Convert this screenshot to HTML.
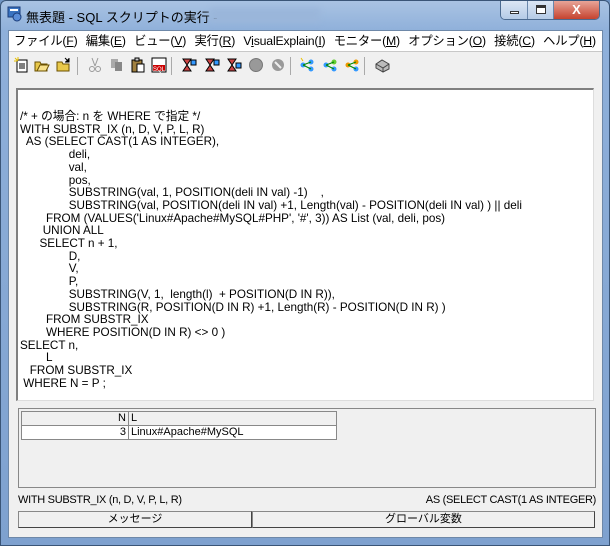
<!DOCTYPE html>
<html><head><meta charset="utf-8"><style>
*{margin:0;padding:0;box-sizing:border-box}
body{width:610px;height:546px;overflow:hidden;background:#6f94c3;font-family:"Liberation Sans","Noto Sans CJK JP",sans-serif;position:relative}
.frame{position:absolute;left:0;top:0;width:610px;height:546px;background:linear-gradient(180deg,#a9c3e3 0,#8fb0da 30px,#7ea1cf 100%);border:1px solid #3a5577;border-radius:6px 6px 0 0}
.title{position:absolute;left:26px;top:7px;font-size:13px;color:#000}
.blur{position:absolute;left:210px;top:8px;width:110px;height:14px;background:#9ab6da;filter:blur(3px)}
.btns{position:absolute;left:500px;top:1px;height:19px;display:flex;border:1px solid #4b6a90;border-top:none;border-radius:0 0 5px 5px;overflow:hidden}
.btns div{height:18px;background:linear-gradient(#dbe6f4,#b5cbe6);border-right:1px solid #6a87ab;position:relative}
.client{position:absolute;left:8px;top:30px;width:595px;height:508px;background:#f0f0f0;border:1px solid #6e88a8;overflow:hidden}
.menu{position:absolute;left:0;top:0;width:593px;height:21px;background:#fff;border-bottom:1px solid #c8c8c8;font-size:12.3px;white-space:nowrap;padding:0 6px 0 5px;line-height:21px;display:flex;justify-content:space-between;letter-spacing:-0.2px}
.tb{position:absolute;top:22px;left:0;height:24px;width:593px}
.ic{position:absolute;top:4px;width:16px;height:16px}
.editor{position:absolute;left:7px;top:57px;width:578px;height:313px;background:#fff;border-top:2px solid #808080;border-left:2px solid #808080;border-right:1px solid #ddd;border-bottom:1px solid #ddd;overflow:hidden}
pre{position:absolute;left:2px;top:21px;font-family:"Liberation Sans","Noto Sans CJK JP",sans-serif;font-size:11.7px;line-height:12.7px;color:#000;letter-spacing:0}
.res{position:absolute;left:9px;top:377px;width:578px;height:80px;border:1px solid #888;background:#f0f0f0}
table{position:absolute;left:2px;top:2px;border-collapse:collapse;font-size:11px}
td{border:1px solid #888;height:14px;padding:0 2px;line-height:13px}
.stat{position:absolute;left:9px;top:463px;width:578px;font-size:11px;letter-spacing:-0.3px}
.tab{position:absolute;top:480px;height:17px;border:1px solid #888;border-right-color:#444;border-bottom-color:#444;background:#f0f0f0;font-size:11px;text-align:center;line-height:15px}
</style></head><body>
<div class="frame"></div>
<svg style="position:absolute;left:7px;top:6px" width="16" height="16"><rect x="1" y="1" width="12" height="10" fill="#3a73c0" stroke="#1b3d7a"/><rect x="3" y="3" width="8" height="2" fill="#fff"/><circle cx="10" cy="11" r="4" fill="#5a8dd8" stroke="#1b3d7a"/></svg>
<div class="title">無表題 - SQL スクリプトの実行 -</div>
<div class="blur"></div>
<div class="btns">
<div style="width:27px"><div style="position:absolute;left:9px;top:10px;width:9px;height:3px;background:#fff;border:1px solid #333"></div></div>
<div style="width:26px"><div style="position:absolute;left:8px;top:4px;width:10px;height:9px;border:1px solid #333;background:#fff;box-shadow:inset 0 2px 0 #333"></div></div>
<div style="width:45px;background:linear-gradient(#e8a598,#c5432f);border:none;color:#fff;font-weight:bold;font-size:13px;text-align:center;line-height:18px">X</div>
</div>
<div class="client">
<div class="menu"><span>ファイル(<u>F</u>)</span><span>編集(<u>E</u>)</span><span>ビュー(<u>V</u>)</span><span>実行(<u>R</u>)</span><span>V<u>i</u>sualExplain(<u>I</u>)</span><span>モニター(<u>M</u>)</span><span>オプション(<u>O</u>)</span><span>接続(<u>C</u>)</span><span>ヘルプ(<u>H</u>)</span></div>
<div class="tb">
<svg class="ic" style="left:5px"><rect x="3" y="3" width="10" height="12" fill="#fff" stroke="#000"/><path d="M5 7h6M5 9h6M5 11h6" stroke="#000"/><path d="M1 1l3 3M4 0v3M0 4h3" stroke="#e8c000"/></svg>
<svg class="ic" style="left:25px"><path d="M1 5h5l1 2h6v7H1z" fill="#e8c84a" stroke="#6a5000"/><path d="M3 14l3-6h9l-3 6z" fill="#f7e08a" stroke="#6a5000"/></svg>
<svg class="ic" style="left:47px"><path d="M1 5h5l1 2h6v7H1z" fill="#e8c84a" stroke="#6a5000"/><path d="M9 1l4 4M13 1v4H9" stroke="#000"/></svg>
<div style="position:absolute;left:68px;top:4px;width:1px;height:18px;background:#aaa"></div>
<svg class="ic" style="left:78px"><path d="M5 1l3 8M11 1L8 9" stroke="#999"/><circle cx="5" cy="12" r="2.5" fill="none" stroke="#999"/><circle cx="11" cy="12" r="2.5" fill="none" stroke="#999"/></svg>
<svg class="ic" style="left:100px"><rect x="2" y="2" width="7" height="9" fill="#aaa"/><rect x="6" y="5" width="7" height="9" fill="#888"/></svg>
<svg class="ic" style="left:121px"><rect x="2" y="3" width="10" height="12" fill="#a08040" stroke="#000"/><rect x="5" y="1" width="4" height="3" fill="#ccc" stroke="#000"/><rect x="7" y="7" width="7" height="8" fill="#fff" stroke="#000"/></svg>
<svg class="ic" style="left:142px"><rect x="1" y="1" width="14" height="14" fill="#fff" stroke="#000"/><rect x="2" y="8" width="12" height="6" fill="#c00"/><text x="2" y="14" font-size="6" fill="#fff" font-family="Liberation Sans">SQL</text></svg>
<div style="position:absolute;left:162px;top:4px;width:1px;height:18px;background:#aaa"></div>
<svg class="ic" style="left:172px"><path d="M2 2h8L6 8l4 6H2l4-6z" fill="#c44" stroke="#000"/><rect x="10" y="3" width="5" height="5" fill="#39f" stroke="#000"/></svg>
<svg class="ic" style="left:195px"><path d="M2 2h8L6 8l4 6H2l4-6z" fill="#c44" stroke="#000"/><rect x="10" y="3" width="5" height="5" fill="#39f" stroke="#000"/></svg>
<svg class="ic" style="left:217px"><path d="M2 2h8L6 8l4 6H2l4-6z" fill="#c44" stroke="#000"/><rect x="10" y="6" width="5" height="5" fill="#39f" stroke="#000"/></svg>
<svg class="ic" style="left:239px"><circle cx="8" cy="8" r="6.5" fill="#999" stroke="#777"/></svg>
<svg class="ic" style="left:261px"><circle cx="8" cy="8" r="6" fill="#999"/><path d="M5 5l6 6" stroke="#eee" stroke-width="2"/></svg>
<div style="position:absolute;left:281px;top:4px;width:1px;height:18px;background:#aaa"></div>
<svg class="ic" style="left:290px"><circle cx="4" cy="8" r="2.5" fill="#39f"/><circle cx="12" cy="5" r="2.5" fill="#39f"/><circle cx="12" cy="12" r="2.5" fill="#39f"/><path d="M4 8L12 5M4 8l8 4" stroke="#080"/><path d="M2 1l2 3" stroke="#e8c000"/></svg>
<svg class="ic" style="left:313px"><circle cx="4" cy="8" r="2.5" fill="#39f"/><circle cx="12" cy="5" r="2.5" fill="#6c3"/><circle cx="12" cy="12" r="2.5" fill="#39f"/><path d="M4 8L12 5M4 8l8 4" stroke="#080"/></svg>
<svg class="ic" style="left:335px"><circle cx="4" cy="8" r="2.5" fill="#e90"/><circle cx="12" cy="5" r="2.5" fill="#e90"/><circle cx="12" cy="12" r="2.5" fill="#39f"/><path d="M4 8L12 5M4 8l8 4" stroke="#080"/></svg>
<div style="position:absolute;left:355px;top:4px;width:1px;height:18px;background:#aaa"></div>
<svg class="ic" style="left:365px"><path d="M2 7l6-4 7 4v5l-6 3-7-4z" fill="#bbb" stroke="#444"/><path d="M2 7l7 4 6-4M9 11v4" stroke="#444" fill="none"/></svg>
</div>
<div class="editor"><pre>/* + の場合: n を WHERE で指定 */
WITH SUBSTR_IX (n, D, V, P, L, R)
  AS (SELECT CAST(1 AS INTEGER),
               deli,
               val,
               pos,
               SUBSTRING(val, 1, POSITION(deli IN val) -1)    ,
               SUBSTRING(val, POSITION(deli IN val) +1, Length(val) - POSITION(deli IN val) ) || deli
        FROM (VALUES('Linux#Apache#MySQL#PHP', '#', 3)) AS List (val, deli, pos)
       UNION ALL
      SELECT n + 1,
               D,
               V,
               P,
               SUBSTRING(V, 1,  length(l)  + POSITION(D IN R)),
               SUBSTRING(R, POSITION(D IN R) +1, Length(R) - POSITION(D IN R) )
        FROM SUBSTR_IX
        WHERE POSITION(D IN R) &lt;&gt; 0 )
SELECT n,
        L
   FROM SUBSTR_IX
 WHERE N = P ;</pre></div>
<div class="res"><table>
<tr style="background:#f0f0f0"><td style="width:107px;text-align:right">N</td><td style="width:208px">L</td></tr>
<tr style="background:#fff"><td style="text-align:right">3</td><td>Linux#Apache#MySQL</td></tr>
</table></div>
<div class="stat">WITH SUBSTR_IX (n, D, V, P, L, R)<span style="position:absolute;right:0">AS (SELECT CAST(1 AS INTEGER)</span></div>
<div class="tab" style="left:9px;width:234px">メッセージ</div>
<div class="tab" style="left:243px;width:343px">グローバル変数</div>
</div>
</body></html>
